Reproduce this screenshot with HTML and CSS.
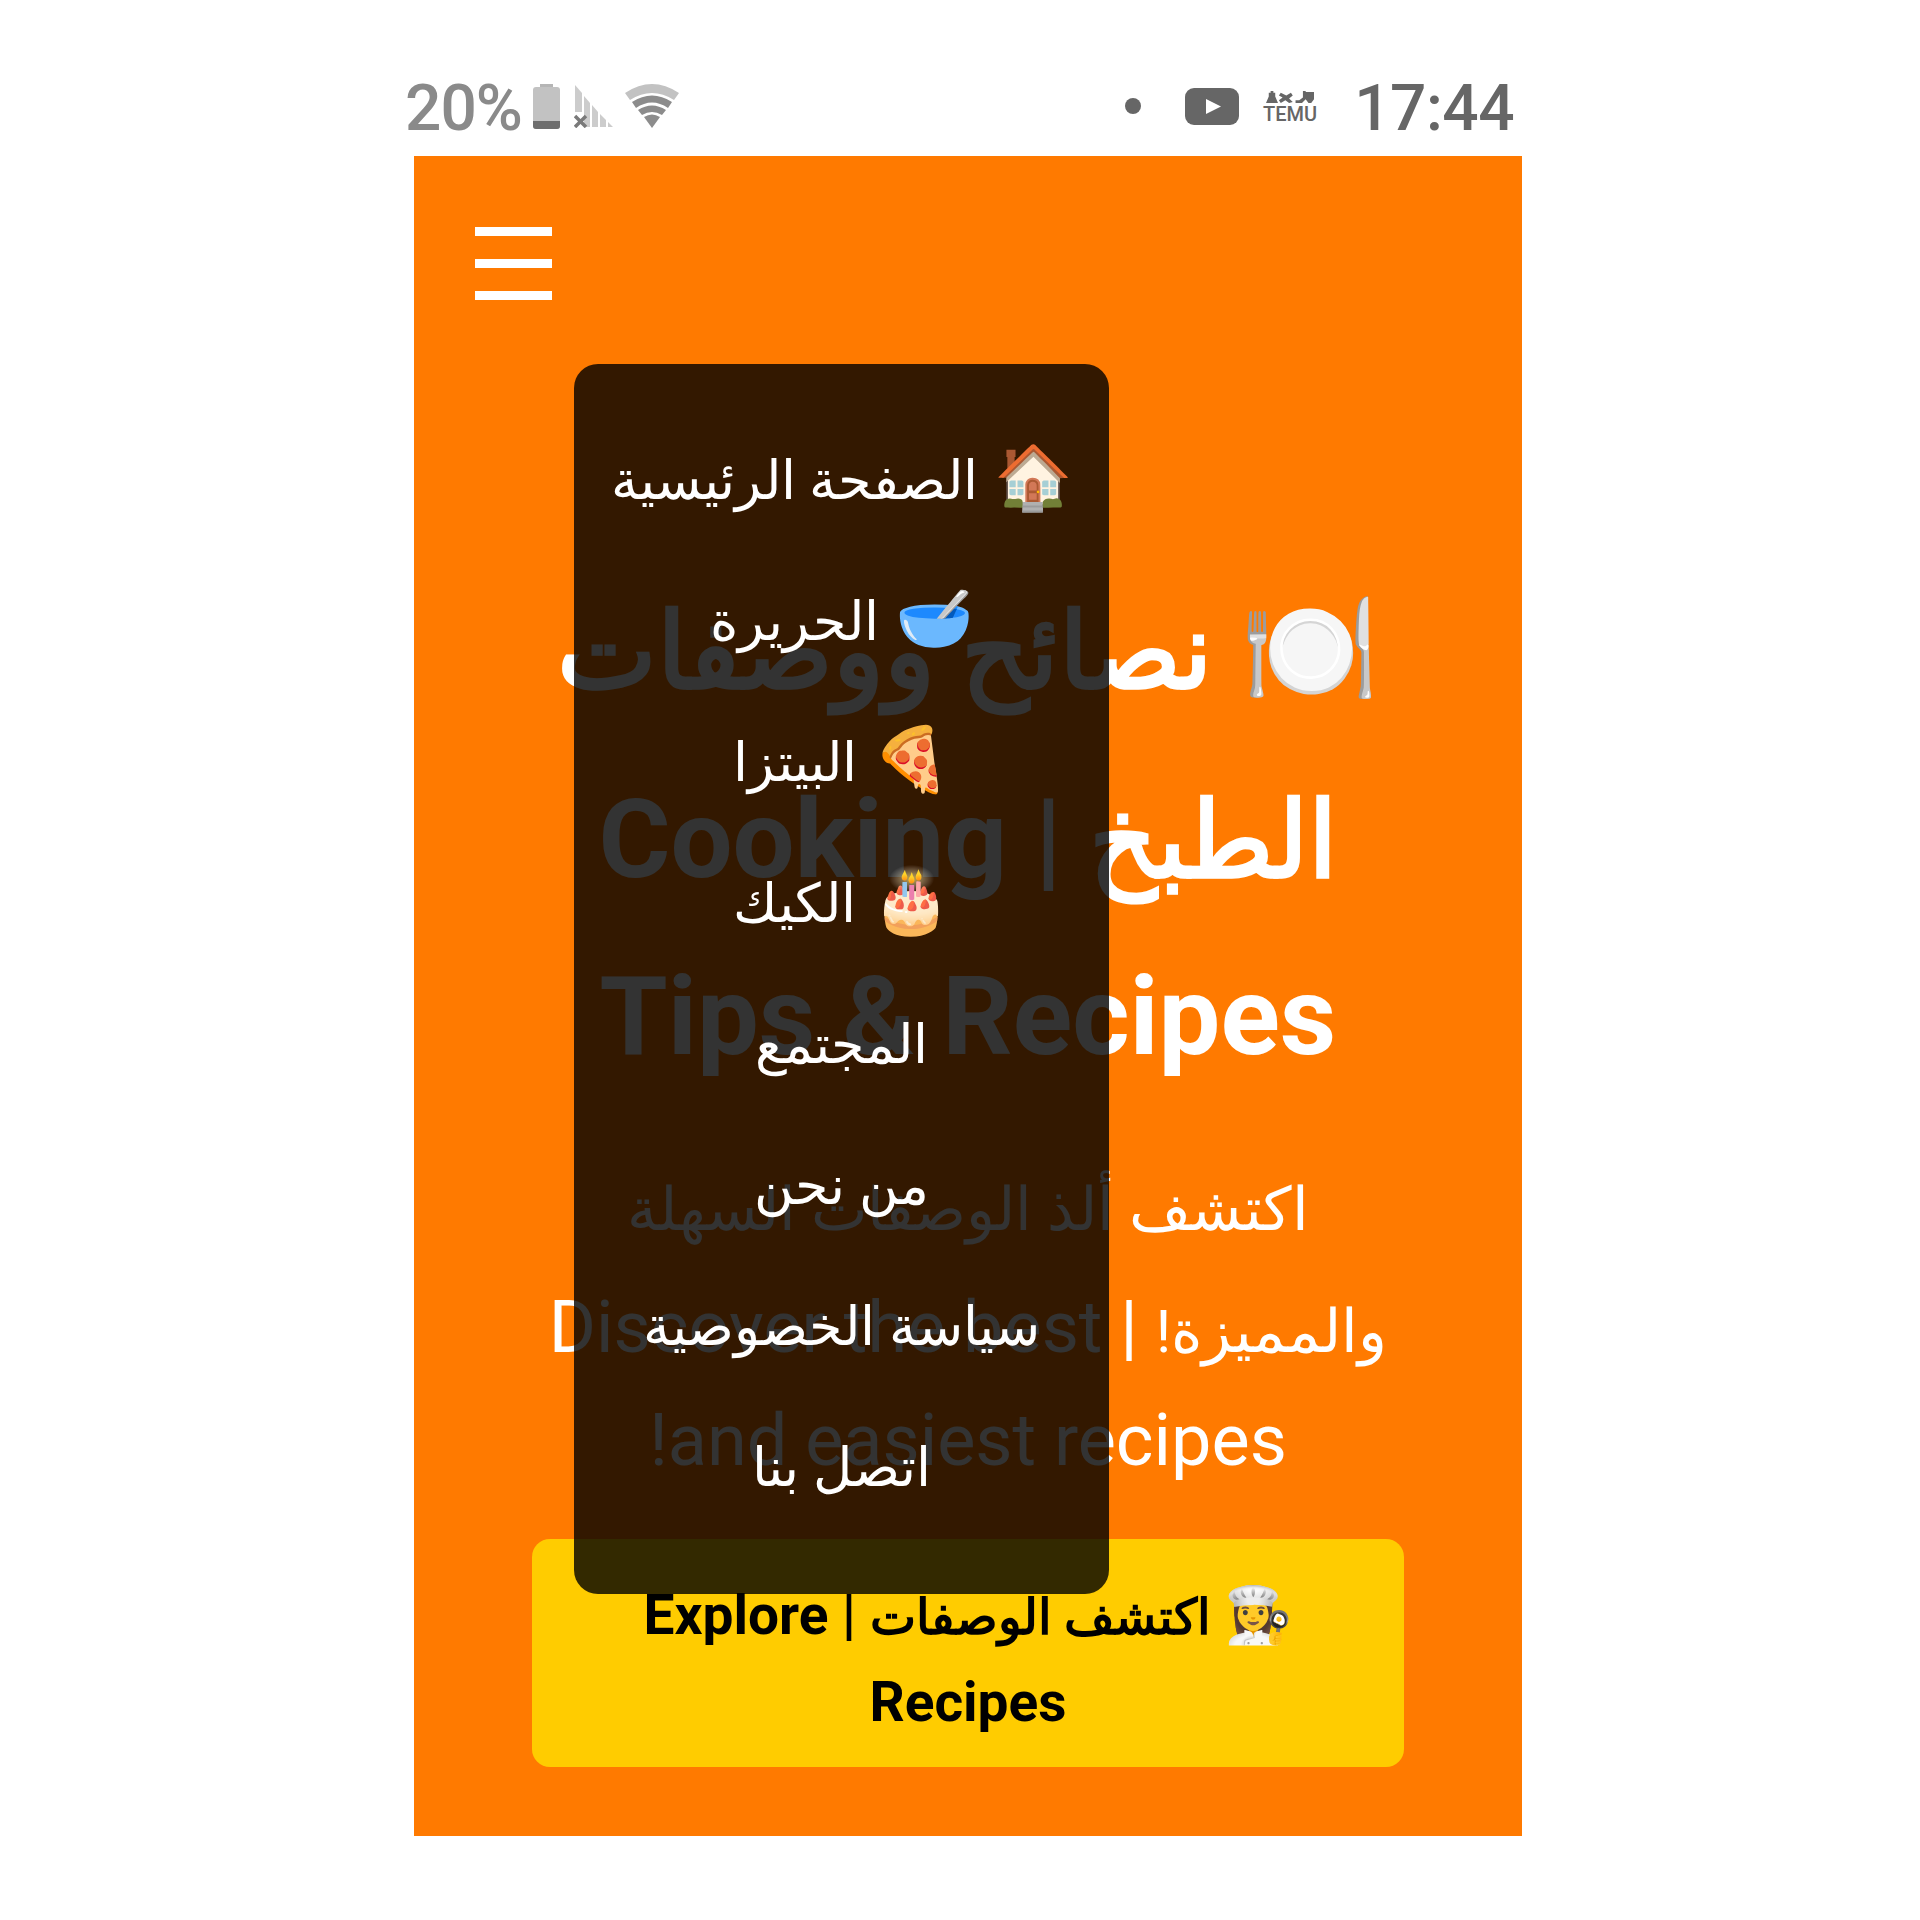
FILE: index.html
```html
<!DOCTYPE html>
<html lang="ar">
<head>
    <meta charset="utf-8">
    <title>نصائح ووصفات الطبخ</title>
    <link rel="stylesheet" href="styles.css">
</head>
<body>
    <div class="phone">
        <div class="status">
            <div class="status-left">
                <span class="pct">20%</span>
                <svg class="battery" width="27" height="45" viewBox="0 0 27 45"><rect x="7" y="0" width="13" height="4" fill="#b5b5b5"/><rect x="0" y="3" width="27" height="42" rx="3" fill="#c2c2c2"/><path d="M0 37h27v5q0 3-3 3H3q-3 0-3-3z" fill="#6e6e6e"/></svg>
                <svg class="signal" width="44" height="43" viewBox="0 0 44 43"><path d="M1 0l7 8v19H1zM10 11l6 7v24h-6zM18 20l6 7v15h-6zM26 29l6 6v7h-6zM34 37l5 5h-5z" fill="#cccccc"/><path d="M1 31l11 11M12 31L1 42" stroke="#7a7a7a" stroke-width="3.5"/></svg>
                <svg class="wifi" width="54" height="44" viewBox="0 0 54 44"><path d="M0 9Q27-9 54 9l-5 7Q27 2 5 16z" fill="#c2c2c2"/><path d="M7 18Q27 5 47 18l-4 6Q27 13 11 24z" fill="#8c8c8c"/><path d="M13 26Q27 17 41 26l-4 5Q27 25 17 31z" fill="#8c8c8c"/><path d="M19 33Q27 28 35 33L27 44z" fill="#8c8c8c"/></svg>
            </div>
            <div class="status-right">
                <span class="dot"></span>
                <svg class="yt" width="54" height="37" viewBox="0 0 54 37"><rect width="54" height="37" rx="9" fill="#666"/><path d="M21 11l15 7.500-15 7.500z" fill="#fff"/></svg>
                <span class="temu">
                    <svg width="52" height="12" viewBox="0 0 52 13"><path d="M0 13h13L10 6V2H8V0H5v2H3v4zM16 2l6 3 5-3 2 3-4 3 4 4-4 1-4-3-5 3-2-3 4-3-4-2zM32 10h4l4-3V0h3v9l-4 4h-7zM43 1h9v8l-3 4h-3l-3-4z" fill="#666"/></svg>
                    <span class="temu-name">TEMU</span>
                </span>
                <span class="clock">17:44</span>
            </div>
        </div>
        <main class="screen">
            <button class="burger"><span></span><span></span><span></span></button>
            <section class="hero">
                <h1><span class="plate">🍽️</span> <span class="ar">نصائح ووصفات الطبخ</span> | Cooking Tips &amp; Recipes</h1>
                <p><span class="ar">اكتشف ألذ الوصفات السهلة والمميزة!</span> | Discover the best and easiest recipes!</p>
                <a class="cta">👩‍🍳 <span class="ar">اكتشف الوصفات</span> | Explore Recipes</a>
            </section>
            <nav class="menu">
                <a>🏠 <span class="ar">الصفحة الرئيسية</span></a>
                <a>🥣 <span class="ar">الحريرة</span></a>
                <a>🍕 <span class="ar">البيتزا</span></a>
                <a>🎂 <span class="ar">الكيك</span></a>
                <a><span class="ar">المجتمع</span></a>
                <a><span class="ar">من نحن</span></a>
                <a><span class="ar">سياسة الخصوصية</span></a>
                <a><span class="ar">اتصل بنا</span></a>
            </nav>
        </main>
    </div>
</body>
</html>
```

FILE: styles.css
```css
* {
    box-sizing: border-box;
}

body {
    margin: 0;
    background: #fff;
    font-family: Roboto, "Noto Sans", sans-serif;
}

.phone {
    width: 1108px;
    margin-left: 414px;
}

.status {
    height: 156px;
    padding: 56px 8px 0 0;
    display: flex;
    align-items: center;
    justify-content: space-between;
}

.status-left, .status-right {
    display: flex;
    align-items: center;
}

.pct {
    width: 128px;
    margin: 5px 0 0 -9px;
    font-size: 64px;
    font-weight: 500;
    letter-spacing: -1px;
    color: #8a8a8a;
}

.signal { margin: 0 7px 0 14px; }

.dot {
    width: 16px;
    height: 16px;
    border-radius: 50%;
    background: #666;
    margin-right: 44px;
}

.temu {
    display: flex;
    flex-direction: column;
    align-items: center;
    gap: 4px;
    margin: 0 37px 0 24px;
    color: #666;
}

.temu-name {
    font-size: 20px;
    line-height: 14px;
    font-weight: 500;
}

.clock {
    margin-top: 5px;
    font-size: 64px;
    font-weight: 500;
    letter-spacing: -0.5px;
    color: #666;
}

.screen {
    position: relative;
    height: 1680px;
    background: #ff7a00;
    padding-top: 1px;
}

.burger {
    display: flex;
    flex-direction: column;
    gap: 23px;
    width: 77px;
    margin: 70px 0 0 61px;
    padding: 0;
    border: 0;
    background: none;
}

.burger span {
    display: block;
    width: 77px;
    height: 9px;
    background: #fff;
}

.hero {
    direction: rtl;
    text-align: center;
    color: #fff;
    padding: 258px 118px 0;
}

.hero h1 {
    margin: 0;
    font-size: 110px;
    line-height: 161px;
    font-weight: 700;
}

.hero h1 .plate {
    font-size: 112px;
}

.hero h1 .ar {
    font-size: 106px;
    line-height: 189px;
}

.hero p {
    margin: 52px 0 0;
    font-size: 72px;
    line-height: 96px;
}

.hero p .ar {
    font-size: 60px;
    line-height: 122px;
}

.cta {
    display: block;
    margin-top: 50px;
    padding: 34px 60px 23px;
    background: #ffcc00;
    border-radius: 18px;
    color: #000;
    font-size: 55px;
    line-height: 84px;
    font-weight: 700;
}

.cta .ar {
    font-size: 49px;
}

.menu {
    position: absolute;
    left: 160px;
    top: 208px;
    width: 535px;
    height: 1230px;
    padding-top: 43px;
    direction: rtl;
    border-radius: 24px;
    background: rgba(0, 0, 0, 0.8);
    display: flex;
    flex-direction: column;
    align-items: center;
}

.menu a {
    height: 141px;
    line-height: 141px;
    font-size: 63px;
    color: #fff;
    white-space: nowrap;
}

.menu .ar {
    font-size: 54px;
}
```
